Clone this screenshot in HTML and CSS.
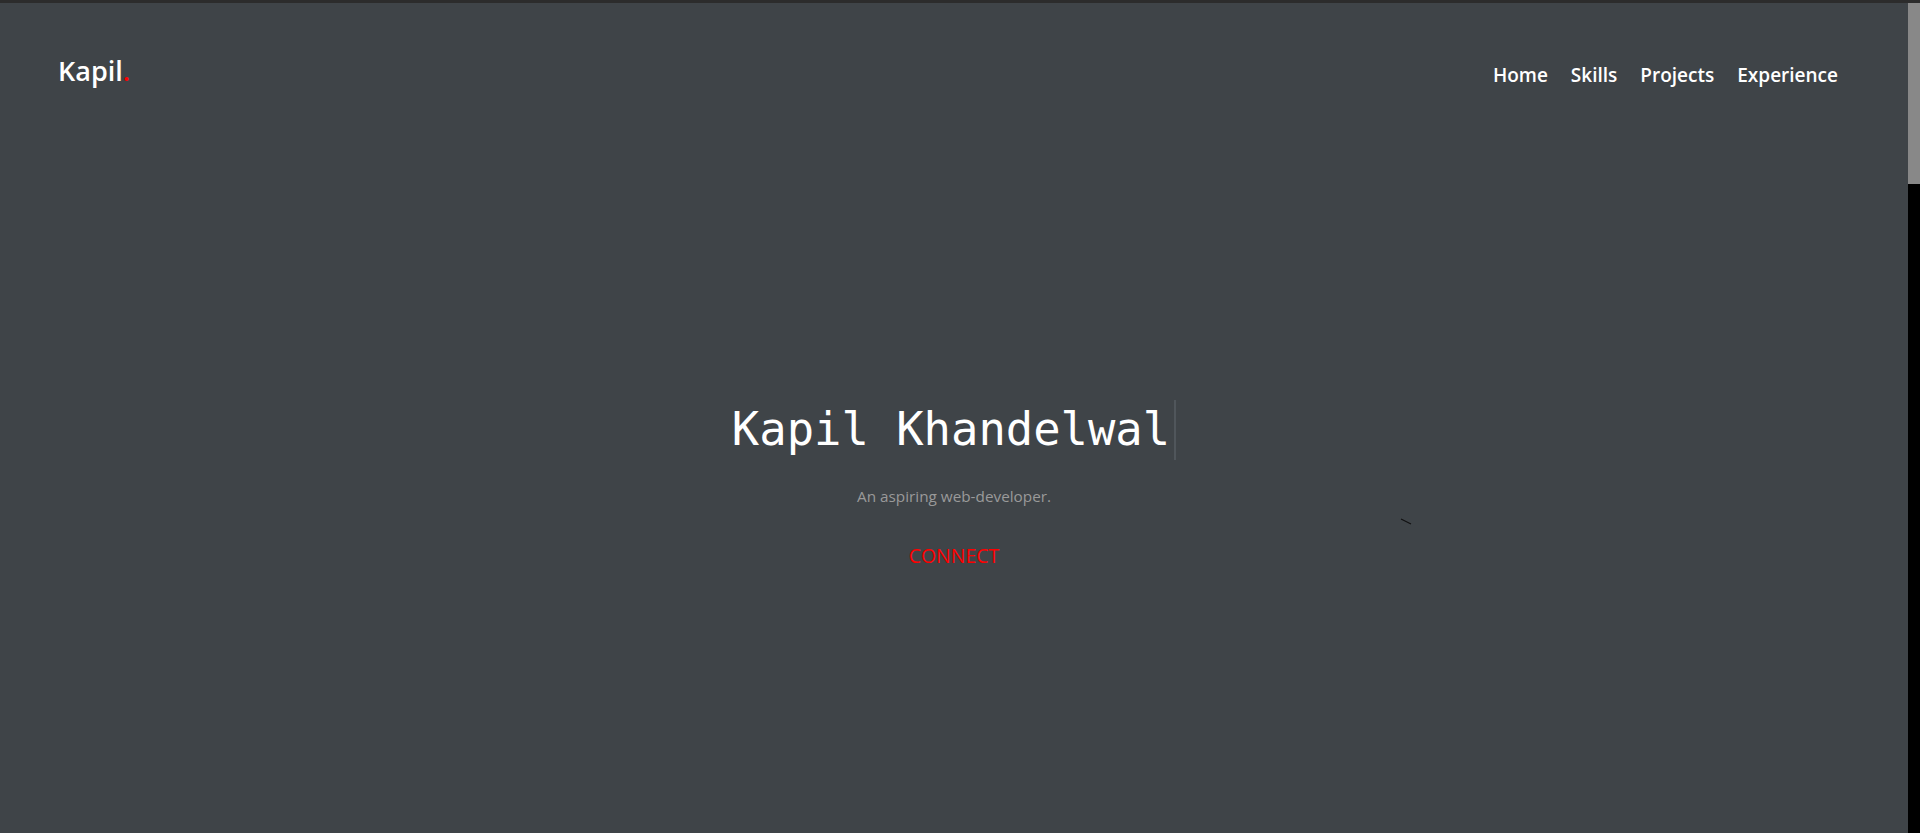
FILE: index.html
```html
<!DOCTYPE html>
<html lang="en">
<head>
<meta charset="utf-8">
<title>Kapil Khandelwal</title>
<link rel="stylesheet" href="styles.css">
</head>
<body>
<div class="frame">
  <div class="page">
    <header class="header">
      <a class="logo" href="#">Kapil<span class="logo-dot">.</span></a>
      <nav class="nav">
        <a class="nav-link" href="#">Home</a>
        <a class="nav-link" href="#">Skills</a>
        <a class="nav-link" href="#">Projects</a>
        <a class="nav-link" href="#">Experience</a>
      </nav>
    </header>
    <main class="hero">
      <h1 class="hero-title"><span class="typed">Kapil Khandelwal</span></h1>
      <p class="hero-sub">An aspiring web-developer.</p>
      <a class="hero-btn" href="#">CONNECT</a>
      <svg class="stray" width="12" height="7" viewBox="0 0 12 7"><line x1="1" y1="1" x2="11" y2="6" stroke="#111" stroke-width="1.2"/></svg>
    </main>
  </div>
  <div class="scrollbar"><div class="scroll-thumb"></div></div>
</div>
</body>
</html>
```
FILE: styles.css
```css
* { box-sizing: border-box; }
html, body { margin: 0; padding: 0; height: 100%; overflow: hidden; }
body { background: #3f4448; font-family: "Open Sans", "Noto Sans", sans-serif; }

.frame {
  display: flex;
  height: 833px;
  border-top: 3px solid #2c2c2c;
}
.page {
  flex: 1;
  display: flex;
  flex-direction: column;
  background: #3f4448;
}
.scrollbar {
  width: 12px;
  background: #000;
}
.scroll-thumb {
  height: 181px;
  background: #888;
}

.header {
  display: flex;
  justify-content: space-between;
  align-items: baseline;
  padding: 52px 70px 0 58px;
}
.logo {
  font-size: 27px;
  line-height: 32px;
  font-weight: 600;
  color: #fff;
  text-decoration: none;
}
.logo-dot { color: #ff0000; }
.nav { display: flex; gap: 23px; position: relative; top: 1px; }
.nav-link {
  font-size: 19px;
  line-height: 24px;
  font-weight: 600;
  color: #fff;
  text-decoration: none;
}

.hero {
  position: relative;
  display: flex;
  flex-direction: column;
  align-items: center;
  padding-top: 313px;
}
.hero-title {
  margin: 0;
  font-family: "DejaVu Sans Mono", monospace;
  font-weight: 400;
  font-size: 45.5px;
  line-height: 60px;
  color: #fff;
}
.typed {
  display: inline-block;
  padding-right: 4px;
  border-right: 2px solid #50565b;
}
.hero-sub {
  margin: 26px 0 0;
  font-size: 15.3px;
  line-height: 20px;
  color: #9a9a9a;
}
.hero-btn {
  margin-top: 38px;
  font-size: 19.5px;
  line-height: 24px;
  color: #ff0000;
  text-decoration: none;
}
.stray {
  position: absolute;
  left: 1400px;
  top: 431px;
}
```
